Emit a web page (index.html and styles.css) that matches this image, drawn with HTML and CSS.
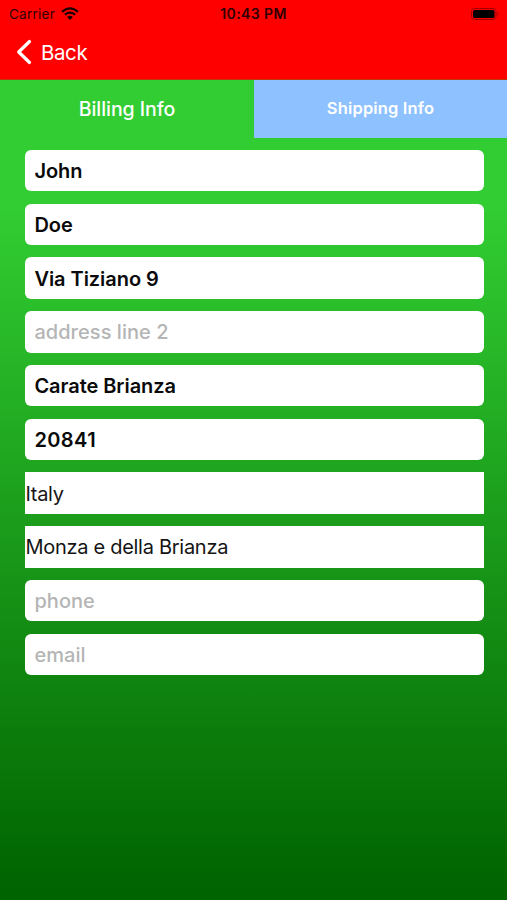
FILE: index.html
```html
<!DOCTYPE html>
<html lang="en">
<head>
<meta charset="utf-8">
<title>Billing Info</title>
<link rel="stylesheet" href="styles.css">
</head>
<body>
<div class="screen">
  <header class="header">
    <div class="status">
      <div class="carrier">
        <span>Carrier</span>
        <svg class="wifi" viewBox="0 0 18 14" width="18" height="14">
          <path d="M1 4.9Q9-2.1 17 4.9M3.8 7.8Q9 3.4 14.2 7.8" fill="none" stroke="currentColor" stroke-width="2.1"/>
          <path d="M6.1 10Q9 7.6 11.900 10L9 13.100Z" fill="currentColor"/>
        </svg>
      </div>
      <span class="time">10:43 PM</span>
      <svg class="battery" viewBox="0 0 30 12" width="30" height="12">
        <rect x=".5" y=".5" width="24.500" height="11" rx="3" fill="none" stroke="#a00000"/>
        <rect x="2" y="2" width="21.500" height="8" rx="1.500" fill="#000"/>
        <path d="M26.500 4Q28.500 6 26.500 8Z" fill="#a00000"/>
      </svg>
    </div>
    <a class="back">
      <svg viewBox="0 0 16 26" width="16" height="26"><path d="M13.500 2.500L2.700 13L13.500 23.500" fill="none" stroke="currentColor" stroke-width="3.200" stroke-linecap="round" stroke-linejoin="round"/></svg>
      <span>Back</span>
    </a>
  </header>
  <nav class="tabs">
    <div class="tab active"><span>Billing Info</span></div>
    <div class="tab inactive"><span>Shipping Info</span></div>
  </nav>
  <main class="form">
    <div class="field"><span>John</span></div>
    <div class="field"><span>Doe</span></div>
    <div class="field"><span>Via Tiziano 9</span></div>
    <div class="field empty"><span>address line 2</span></div>
    <div class="field"><span>Carate Brianza</span></div>
    <div class="field postcode"><span>20841</span></div>
    <div class="field picker"><span>Italy</span></div>
    <div class="field picker"><span>Monza e della Brianza</span></div>
    <div class="field empty"><span>phone</span></div>
    <div class="field empty"><span>email</span></div>
  </main>
</div>
</body>
</html>
```
FILE: styles.css
```css
* { box-sizing: border-box; }
body { margin: 0; font-family: Inter, "Liberation Sans", sans-serif; }
.screen {
  width: 507px;
  height: 900px;
  background: linear-gradient(180deg, #32cd32 210px, #006400 890px);
  overflow: hidden;
}
.header { height: 79.5px; background: #f00; border-bottom: 1px solid #b83a08; }
.status {
  height: 27px;
  display: grid;
  grid-template-columns: 1fr auto 1fr;
  align-items: center;
  padding: 0 6px;
  color: #300000;
}
.carrier { display: flex; align-items: center; gap: 6px; padding-left: 3px; font-size: 13.500px; letter-spacing: 0.25px; }
.wifi { color: #180000; }
.time { font-size: 14px; font-weight: 600; letter-spacing: 0.4px; }
.battery { justify-self: end; }
.back { display: flex; align-items: center; gap: 9px; height: 50px; padding-left: 16px; color: #fff; font-size: 20.500px; letter-spacing: -0.4px; }
.tabs { display: grid; grid-template-columns: 254px 1fr; height: 58px; color: #fff; }
.tab { display: flex; align-items: center; justify-content: center; }
.active { font-size: 19.500px; font-weight: 500; letter-spacing: -0.050px; }
.inactive { padding-bottom: 2px; background: #8ec1ff; font-size: 16.500px; font-weight: 600; letter-spacing: 0.150px; }
.form { display: flex; flex-direction: column; gap: 12.350px; padding: 12.500px 23px 0 25.400px; }
.field { display: flex; align-items: center; height: 41.400px; padding: 1px 0 0 9px; border-radius: 6px; background: #fff; color: #0a0a0a; font-size: 20px; font-weight: 600; letter-spacing: -0.050px; white-space: nowrap; }
.empty { color: #b5b5b5; font-weight: 500; letter-spacing: 0.050px; }
.postcode { letter-spacing: 0.400px; }
.picker { padding-left: 0; border-radius: 0; font-weight: 400; letter-spacing: -0.280px; color: #151515; }
```
